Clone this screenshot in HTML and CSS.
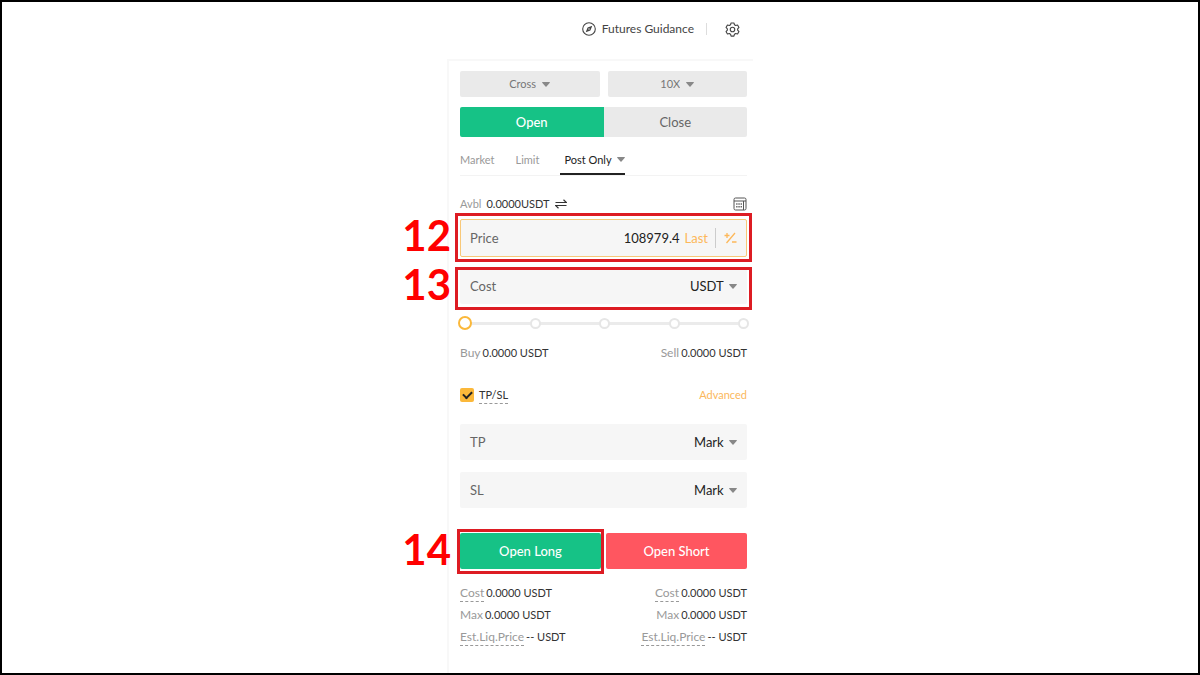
FILE: index.html
```html
<!DOCTYPE html>
<html lang="en">
<head>
<meta charset="utf-8">
<title>Futures order</title>
<link rel="stylesheet" href="styles.css">
</head>
<body class="page">
<svg class="defs" aria-hidden="true">
  <symbol id="caret" viewBox="0 0 8 5"><path d="M0.6 0h6.8c.5 0 .7.5.4.8L4.500 4.600c-.3.300-.7.300-1 0L.2.8C-.1.500.1 0 .6 0z" fill="currentColor"/></symbol>
</svg>

<header class="topbar">
  <a class="guidance" href="#">
    <svg class="compass" viewBox="0 0 14 14" fill="none" stroke="currentColor" stroke-width="1.1"><circle cx="7" cy="7" r="6.300"/><path d="M10.300 3.700L8.400 8.400 3.700 10.300l1.900-4.700z" fill="currentColor" stroke="none"/><circle cx="7" cy="7" r=".7" fill="#fff" stroke="none"/></svg>
    Futures Guidance
  </a>
  <span class="topbar-divider"></span>
  <button class="icon-button" type="button" aria-label="Settings">
    <svg class="gear" viewBox="0 0 16 16" fill="none" stroke="currentColor" stroke-width="1.200" stroke-linejoin="round"><path d="M6.500 1h3l.6 1.900 1.300.8 2-.5 1.500 2.600L13.500 7.300v1.400l1.400 1.500-1.500 2.600-2-.5-1.300.8-.6 1.900h-3l-.6-1.900-1.300-.8-2 .5-1.500-2.600 1.400-1.500V7.300L1.100 5.800l1.500-2.600 2 .5 1.300-.8z"/><circle cx="8" cy="8" r="2.400"/></svg>
  </button>
</header>

<main class="panel">
  <form class="order">
    <div class="modes">
      <div class="mode"><select class="select" aria-label="Margin mode"><option>Cross</option></select><svg class="caret"><use href="#caret"/></svg></div>
      <div class="mode"><select class="select" aria-label="Leverage"><option>10X</option></select><svg class="caret"><use href="#caret"/></svg></div>
    </div>

    <div class="sides">
      <button class="side side-active" type="button">Open</button>
      <button class="side" type="button">Close</button>
    </div>

    <nav class="tabs">
      <button class="tab" type="button">Market</button>
      <button class="tab" type="button">Limit</button>
      <button class="tab tab-active" type="button">Post Only <svg class="caret"><use href="#caret"/></svg></button>
    </nav>

    <div class="balance">
      <span class="muted">Avbl</span>
      <span>0.0000USDT</span>
      <button class="icon-button" type="button" aria-label="Transfer">
        <svg class="transfer" viewBox="0 0 12 10" fill="none" stroke="currentColor" stroke-width="1.200"><path d="M.5 3.500h11L8.500.7M11.500 6.500H.5l3 2.800"/></svg>
      </button>
      <button class="icon-button balance-end" type="button" aria-label="Calculator">
        <svg class="calculator" viewBox="0 0 14 14" fill="none" stroke="currentColor"><rect x="1" y="1" width="12" height="12" rx="1.500"/><path d="M1 4h12M10.500 4v9"/><path d="M3.200 7h1.300M5.400 7h1.300M7.600 7h1.300M3.200 9.700h1.300M5.400 9.700h1.300M7.600 9.700h1.300" stroke-width="1.400"/></svg>
      </button>
    </div>

    <div class="step step-price">
      <span class="step-number">12</span>
      <div class="field field-focus">
        <label class="field-label" for="price">Price</label>
        <input class="field-input" id="price" type="text" value="108979.4">
        <button class="last" type="button">Last</button>
        <button class="offset" type="button" aria-label="Price offset">
          <svg class="plus-minus" viewBox="0 0 13 12" fill="none" stroke="currentColor" stroke-width="1.300"><path d="M11 1L2.500 11M3 1v5M.5 3.500h5M8 10h4.500"/></svg>
        </button>
      </div>
    </div>

    <div class="step step-cost">
      <span class="step-number">13</span>
      <div class="field">
        <label class="field-label" for="cost">Cost</label>
        <input class="field-input" id="cost" type="text">
        <select class="select select-dark" aria-label="Cost currency"><option>USDT</option></select><svg class="caret"><use href="#caret"/></svg>
      </div>
    </div>

    <div class="slider">
      <span class="stops"><i class="stop"></i><i class="stop"></i><i class="stop"></i><i class="stop"></i><i class="stop"></i></span>
      <input class="range" type="range" min="0" max="100" value="0" aria-label="Position size">
    </div>

    <div class="sums">
      <span class="stat"><span class="muted">Buy</span> 0.0000 USDT</span>
      <span class="stat"><span class="muted">Sell</span> 0.0000 USDT</span>
    </div>

    <div class="targets">
      <input class="checkbox" id="tpsl" type="checkbox" checked>
      <label class="dashed" for="tpsl">TP/SL</label>
      <a class="advanced" href="#">Advanced</a>
    </div>

    <div class="field field-tp">
      <label class="field-label" for="tp">TP</label>
      <input class="field-input" id="tp" type="text">
      <select class="select select-dark" aria-label="TP trigger"><option>Mark</option></select><svg class="caret"><use href="#caret"/></svg>
    </div>
    <div class="field field-sl">
      <label class="field-label" for="sl">SL</label>
      <input class="field-input" id="sl" type="text">
      <select class="select select-dark" aria-label="SL trigger"><option>Mark</option></select><svg class="caret"><use href="#caret"/></svg>
    </div>

    <div class="actions">
      <div class="step step-long">
        <span class="step-number">14</span>
        <button class="action action-long" type="button">Open Long</button>
      </div>
      <button class="action action-short" type="button">Open Short</button>
    </div>

    <div class="stats">
      <div class="stat-column">
        <span class="stat"><span class="muted dashed">Cost</span> 0.0000 USDT</span>
        <span class="stat"><span class="muted">Max</span> 0.0000 USDT</span>
        <span class="stat"><span class="muted dashed">Est.Liq.Price</span> -- USDT</span>
      </div>
      <div class="stat-column stat-column-end">
        <span class="stat"><span class="muted dashed">Cost</span> 0.0000 USDT</span>
        <span class="stat"><span class="muted">Max</span> 0.0000 USDT</span>
        <span class="stat"><span class="muted dashed">Est.Liq.Price</span> -- USDT</span>
      </div>
    </div>
  </form>
</main>
</body>
</html>
```
FILE: styles.css
```css
* { box-sizing: border-box; }

.page {
  margin: 0;
  min-height: 100vh;
  display: flex;
  flex-direction: column;
  align-items: center;
  border: 2px solid #000;
  background: #fff;
  color: #333;
  font: 11px/16px Lato, sans-serif;
}

button, input, select {
  margin: 0;
  padding: 0;
  border: 0;
  background: none;
  color: inherit;
  font: inherit;
  outline: none;
}

button, select { cursor: pointer; }

.defs { position: absolute; width: 0; height: 0; }

.topbar {
  width: 100%;
  max-width: 306px;
  height: 54px;
  margin-bottom: 3px;
  padding-right: 13px;
  display: flex;
  align-items: center;
  justify-content: flex-end;
  color: #444;
}

.guidance {
  display: flex;
  align-items: center;
  gap: 6px;
  color: inherit;
  font-size: 12px;
  text-decoration: none;
}

.compass { width: 14px; height: 14px; }
.topbar-divider { width: 1px; height: 12px; margin: 0 18px 0 12px; background: #ddd; }
.icon-button { display: flex; }
.gear { width: 15px; height: 15px; }

.panel {
  flex: 1;
  width: 100%;
  max-width: 306px;
  padding: 10px 6px 26px 11px;
  border-top: 2px solid #f8f8f8;
  border-left: 2px solid #f8f8f8;
}

.order { display: flex; flex-direction: column; }

.modes { display: grid; grid-template-columns: 1fr 1fr; gap: 8px; }

.mode {
  height: 26px;
  display: flex;
  align-items: center;
  justify-content: center;
  gap: 6px;
  border-radius: 2px;
  background: #eaeaea;
  color: #777;
}

.select { appearance: none; }
.select-dark { color: #222; font-size: 13px; }
.caret { width: 8px; height: 5px; color: #888; }

.sides {
  margin-top: 10px;
  display: grid;
  grid-template-columns: 1fr 1fr;
  border-radius: 2px;
  overflow: hidden;
}

.side { height: 30px; background: #eaeaea; color: #666; font-size: 13px; }
.side-active { background: #16c286; color: #fff; font-weight: 500; }

.tabs {
  margin-top: 9px;
  display: flex;
  gap: 17px;
  border-bottom: 1px solid #f3f3f3;
}

.tab {
  display: flex;
  align-items: center;
  gap: 5px;
  padding-right: 4px;
  border-bottom: 2px solid transparent;
  color: #999;
  line-height: 27px;
}

.tab-active { padding: 0 0 0 4px; border-color: #222; color: #222; }

.muted { color: #999; }

.balance { margin-top: 20px; display: flex; align-items: center; gap: 5px; }
.transfer { width: 12px; height: 10px; }
.balance-end { margin-left: auto; }
.calculator { width: 14px; height: 14px; color: #555; }

.step { position: relative; }

.step::after {
  content: "";
  position: absolute;
  border: 3px solid #dd1c23;
  pointer-events: none;
}

.step-number {
  position: absolute;
  top: -5px;
  right: 100%;
  margin-right: 9px;
  color: #f00;
  font-size: 42px;
  font-weight: 700;
  line-height: 42px;
}

.step-price { margin-top: 7px; }
.step-price::after { inset: -6px -5px -5px; }
.step-cost { margin-top: 11px; }
.step-cost::after { inset: -1px -5px -6px; }
.step-long::after { inset: -4px -3px -5px; }

.field {
  height: 36px;
  padding: 0 10px;
  display: flex;
  align-items: center;
  gap: 5px;
  border-radius: 2px;
  background: #f6f6f6;
  font-size: 13px;
}

.field-focus { height: 38px; padding: 0 9px; border: 1px solid #f8c878; }
.field-label { color: #666; }
.field-input { flex: 1; min-width: 0; color: #222; text-align: right; }
.last { color: #fdb85a; }
.offset { display: flex; padding: 4px 0 4px 8px; margin-left: 2px; border-left: 1px solid #ccc; color: #fdb85a; }
.plus-minus { width: 13px; height: 12px; }

.slider { position: relative; margin: 11px -4px 0 -2px; height: 16px; }

.stops {
  position: absolute;
  inset: 7px 7px auto;
  height: 3px;
  display: flex;
  align-items: center;
  justify-content: space-between;
  background: #ebebeb;
}

.stop { width: 11px; height: 11px; margin: 0 -5px; border: 2px solid #e6e6e6; border-radius: 50%; background: #fff; }

.range {
  appearance: none;
  position: relative;
  display: block;
  width: 100%;
  height: 16px;
}

.range::-webkit-slider-thumb {
  appearance: none;
  width: 14px;
  height: 14px;
  border: 2px solid #fbb83a;
  border-radius: 50%;
  background: #fff;
}

.sums { margin-top: 14px; display: flex; justify-content: space-between; }

.targets { height: 16px; margin-top: 26px; display: flex; align-items: center; gap: 5px; }

.checkbox {
  appearance: none;
  width: 14px;
  height: 14px;
  border-radius: 2px;
  background: #fbb83a;
  display: grid;
  place-items: center;
}

.checkbox:checked::before {
  content: "";
  width: 7px;
  height: 4px;
  border: solid #222;
  border-width: 0 0 2px 2px;
  transform: translateY(-1px) rotate(-45deg);
}

.dashed { border-bottom: 1px dashed #999; }
.advanced { margin-left: auto; color: #fbb85c; text-decoration: none; }

.field-tp { margin-top: 21px; }
.field-sl { margin-top: 12px; }

.actions { margin-top: 25px; display: grid; grid-template-columns: 1fr 1fr; gap: 5px; }
.action { width: 100%; height: 36px; border-radius: 2px; color: #fff; font-size: 13px; font-weight: 500; }
.action-long { background: #16c286; }
.action-short { background: #ff5660; }

.stats { margin-top: 16px; display: flex; justify-content: space-between; }
.stat-column { display: flex; flex-direction: column; gap: 6px; }
.stat-column-end { align-items: flex-end; }
.stat { height: 16px; display: flex; align-items: baseline; gap: 2px; }
.stat .muted { font-size: 12px; }
```
